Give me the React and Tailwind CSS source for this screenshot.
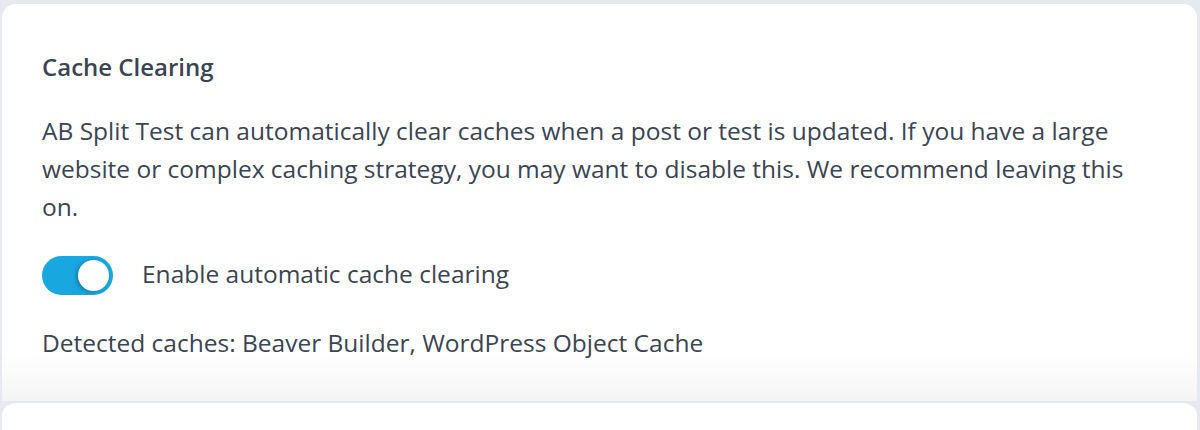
import { useState } from 'react'

function Toggle({ on, onChange }) {
  return <button onClick={() => onChange(!on)} className={`relative w-[71px] h-[39px] rounded-full shrink-0 ${on ? 'bg-[#19a7e0]' : 'bg-slate-300'}`}>
    <span className={`absolute top-[4px] w-[31px] h-[31px] rounded-full bg-white shadow-[-2px_1px_4px_rgba(0,0,0,0.25)] ${on ? 'left-[36px]' : 'left-[4px]'}`} />
  </button>
}

export default function App() {
  const [on, setOn] = useState(true)
  return <div className="min-h-[430px] bg-[#e6e9ef] pt-[4px] pl-[2px] pr-[3px] overflow-hidden" style={{ fontFamily: '"Open Sans", "Noto Sans", sans-serif' }}>
    <div className="h-[397px] rounded-t-[14px] bg-gradient-to-b from-white from-[88%] to-[#f4f4f5] pl-[40px] pr-[44px] pt-[47px] text-[#3a4452]">
      <h2 className="text-[24px] font-semibold leading-[32px]">Cache Clearing</h2>
      <p className="mt-[29px] text-[24.5px] leading-[38px]">AB Split Test can automatically clear caches when a post or test is updated. If you have a large website or complex caching strategy, you may want to disable this. We recommend leaving this on.</p>
      <div className="mt-[30px] flex items-center gap-[29px]">
        <Toggle on={on} onChange={setOn} />
        <span className="text-[24.5px] leading-[36px] -mt-[4px]">Enable automatic cache clearing</span>
      </div>
      <p className="mt-[30px] text-[24.5px] leading-[36px]">Detected caches: Beaver Builder, WordPress Object Cache</p>
    </div>
    <div className="h-[40px] rounded-t-[14px] bg-white border-t-2 border-[#e2e7f0]" />
  </div>
}
